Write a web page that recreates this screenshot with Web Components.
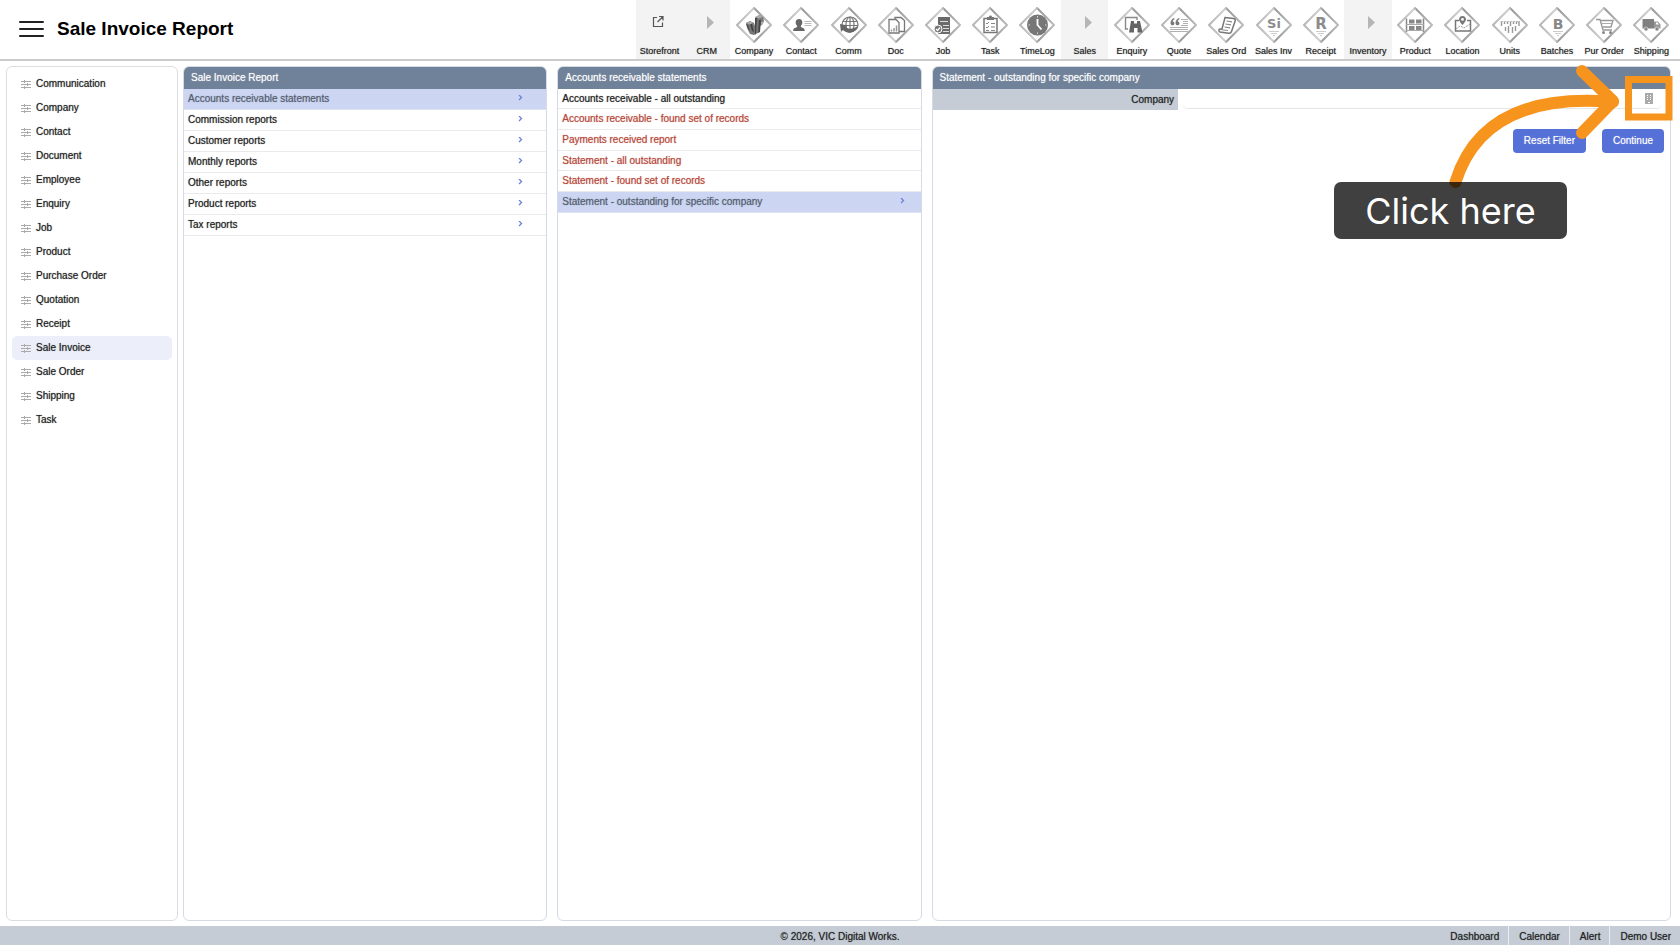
<!DOCTYPE html>
<html lang="en">
<head>
<meta charset="utf-8">
<title>Sale Invoice Report</title>
<style>
  html, body { height: 100%; }
  body { margin: 0; background: #fff; color: #222; font: 10px/12px "Liberation Sans", Arial, sans-serif; text-shadow: 0 0 1px color-mix(in srgb, currentColor 60%, transparent); }
</style>
</head>
<body>
<report-app></report-app>

<script>
const define = (name, html) => customElements.define(name, class extends HTMLElement {
  constructor() {
    super();
    this.attachShadow({ mode: 'open' });
  }
  connectedCallback() {
    const t = document.createElement('template');
    t.innerHTML = typeof html === 'function' ? html(this) : html;
    this.shadowRoot.replaceChildren(t.content.cloneNode(true));
  }
});

/* Toolbar glyphs, drawn inside a 36 x 36 diamond */
const glyphs = {
  company: `<path fill="#777" d="M10 16l4-2 4 2 1 3V11l4-3 4 2 1 4-2 4-2 1-2 7-4 2-4-1-3-6z"/><path fill="#444" d="M19 11l2-1-1 16-1 2zM14 17h2l2 8-2-1zM23 13l2 0-1 12-2 1zM10 17l2 1 2 6-1-1z"/><path fill="#aaa" d="M19 10l4-2 4 2-4 1.500zM10 16l4-2 3 2-3 1.500zM25 15l3-1-1 3-2 1z"/>`,
  contact: `<path fill="#666" d="M16 12c2.300 0 3.300 1.500 3.300 3.500 0 1.500-.6 2.500-1.400 3.200v1.300l2.600 1.200c1 .5 1.200 1.200 1.200 2.800H10.200c0-1.600.2-2.300 1.200-2.800l2.700-1.200v-1.300c-.9-.7-1.400-1.700-1.400-3.200 0-2 1-3.500 3.300-3.500z"/><path stroke="#bbb" d="M21.500 14.500h7M21.500 16.500h7M21.500 18.500h7"/>`,
  comm: `<g fill="none" stroke="#777" stroke-width="1.200"><ellipse cx="19" cy="17.500" rx="8" ry="7.500"/><ellipse cx="19" cy="17.500" rx="4" ry="7.500"/><path d="M19 10v15M12 14.500h14M11 18.500h16"/></g><path fill="#666" d="M9 17l8 1.500-2.500 1.500c3 2.500 8 2.500 12-1-2 6.500-9 9-14.500 4l-2 2z"/>`,
  doc: `<g fill="#fff" stroke="#777" stroke-width="1.300"><path d="M17 10.500h6l3.500 3v11h-9.500z"/><path d="M11 12.500h7l3 3v10.500H11z"/></g><path stroke="#999" stroke-width="1.500" d="M13.500 24.500v-2M16 24.500v-3.500M18.500 24.500v-6"/>`,
  job: `<path fill="#6a6a6a" d="M13 10h12v17H13z"/><path stroke="#ddd" d="M15 14.500h8M18 18.500h6M18 21.500h6M18 24.500h6"/><circle cx="13" cy="22" r="4" fill="#777" stroke="#fff"/><path d="M11 22l1.500 1.500L15 20.500" fill="none" stroke="#fff" stroke-width="1.200"/>`,
  task: `<path fill="#fff" stroke="#777" stroke-width="1.500" d="M12 11.500h13v14H12z"/><path fill="#777" d="M15 10h2c0-2 3-2 3 0h2v3h-7z"/><path d="M14 16l1 1 2-2M14 20l1 1 2-2M14 23.500h3M19 16.500h4M19 20h4M19 23.500h4" fill="none" stroke="#888"/>`,
  timelog: `<circle cx="18.500" cy="18" r="10.500" fill="#777"/><path d="M18.500 12v6l4 4.500" fill="none" stroke="#fff" stroke-width="1.800"/><path d="M18.500 9v1.500M18.500 25.500V27M9.500 18H11M26 18h1.500" stroke="#ddd"/>`,
  enquiry: `<path fill="none" stroke="#888" stroke-width="1.400" d="M14 22h-2.500V10.500H23V13"/><path fill="#666" d="M17 14h3v2.500h3V14h3l2.500 11.500h-5V21h-3.500v4.500h-5z"/>`,
  quote: `<path fill="#777" d="M13 11c-2 1-3.500 2.500-3.500 5 0 1.500 1 2.300 2 2.300s1.900-.8 1.900-1.900-.8-1.800-1.700-1.800c.1-1.200 1-2 2-2.600zM18 11c-2 1-3.500 2.500-3.500 5 0 1.500 1 2.300 2 2.300s1.900-.8 1.900-1.900-.8-1.800-1.700-1.800c.1-1.200 1-2 2-2.600z"/><path stroke="#b0b0b0" d="M20 12.500h7M22 14.500h5M22 16.500h5M20 18.500h7M9 20.500h18M9 22.500h18M9 24.500h18"/>`,
  salesord: `<path fill="#fff" stroke="#777" stroke-width="1.500" d="M17 10.500l8.500 1c2 .4 2 1.800 1.500 3l-3.500 10c-.5 1.500-1.500 2-3 1.800l-8.500-1.300c-1.500-.5-1.500-3 0-3h2z"/><path stroke="#888" stroke-width="1.200" d="M18.500 14l5.500.8M17.500 17l5.500.8M16.500 20l5.500.8M12 22.500l8 1"/>`,
  salesinv: `<text x="18" y="21" text-anchor="middle" font-family="DejaVu Sans" font-weight="700" font-size="13" fill="#8c8c8c">Si</text><path stroke="#ccc" d="M13 24.500h10M15 26.500h6M17 28.500h2"/>`,
  receipt: `<text x="18" y="22" text-anchor="middle" font-family="DejaVu Sans" font-weight="700" font-size="15" fill="#8c8c8c">R</text><path stroke="#ccc" d="M13 24.500h10M15 26.500h6M17 28.500h2"/>`,
  product: `<path stroke="#888" stroke-width="1.500" d="M9.500 11.500v13.500M26.500 11.500v13.500"/><path stroke="#aaa" d="M9 17.500h18M9 23.500h18"/><path fill="#888" d="M12 12.500h5.500v4H12zM19 12.500h5.500v4H19zM12 19h5.500v4H12zM19 19h5.500v4H19z"/>`,
  location: `<path fill="none" stroke="#777" stroke-width="1.500" d="M15 13.500h-3.500v10.500h15V13.500H23"/><path fill="none" stroke="#999" stroke-dasharray="2 1" d="M12 22l4-3 4 2 6-4"/><path fill="#777" fill-rule="evenodd" d="M18.500 9c2 0 3.500 1.500 3.500 3.300 0 2.300-3.500 5.700-3.500 5.700S15 14.600 15 12.300C15 10.500 16.500 9 18.500 9zm0 2a1.400 1.400 0 100 2.800 1.400 1.400 0 000-2.800z"/>`,
  units: `<path stroke="#999" stroke-width="1.400" d="M9.500 14v5M12.500 14v3M15.500 14v3M18.500 14v5M21.500 14v3M24.500 14v3M27 14v5M13.500 20v4M16.500 19v7M20.500 20v6M23.500 19v5"/><path stroke="#bbb" d="M9 14.500h18" stroke-dasharray="2 1"/>`,
  batches: `<text x="19" y="22" text-anchor="middle" font-family="DejaVu Sans" font-weight="700" font-size="14" fill="#888">B</text><path stroke="#ccc" d="M14 24.500h10M16 26.500h6M18 28.500h2"/>`,
  purorder: `<path fill="none" stroke="#999" stroke-width="1.400" d="M10 12.500h4l3 10.500h9M15 13.500h12l-2 6.500h-8"/><path stroke="#aaa" d="M16 16.500h10"/><circle cx="17.500" cy="25.500" r="1.500" fill="#888"/><circle cx="24.500" cy="25.500" r="1.500" fill="#888"/>`,
  shipping: `<path fill="#808080" d="M9.500 12H21v9.500H9.500z"/><path fill="#999" d="M21 14.500h4l2.500 3v4H21z"/><path fill="#fff" d="M23 15.500h1.500l1.500 2h-3z"/><g fill="#888" stroke="#fff" stroke-width=".5"><circle cx="13" cy="22" r="2"/><circle cx="24" cy="22" r="2"/></g>`
};

define('tool-item', el => {
  const kind = el.getAttribute('kind');
  let art;
  if (kind === 'launch')
    art = `<svg class="art" viewBox="0 0 36 36" fill="none" stroke="#555" stroke-width="1.200"><path d="M15 10.500h-3.500v9h9v-4M17 9.500h4v4M21 9.500l-5.500 5.500"/></svg>`;
  else if (kind === 'group')
    art = `<svg class="art" viewBox="0 0 36 36"><path fill="#b5b5b5" d="M18 9l7 6.500-7 6.500z"/></svg>`;
  else
    art = `<svg class="art" viewBox="0 0 36 36"><defs><linearGradient id="g" x1="0" y1="0" x2="1" y2="0"><stop offset="0" stop-color="#b5b5b5"/><stop offset=".45" stop-color="#d0d0d0"/><stop offset=".55" stop-color="#999"/><stop offset="1" stop-color="#bbb"/></linearGradient></defs><path fill="#fff" stroke="url(#g)" stroke-width="2" stroke-linejoin="round" d="M18 1L35 18 18 35 1 18z"/>${glyphs[kind]}</svg>`;
  return `<style>
    :host { display: block; min-width: 0; }
    a { display: flex; flex-direction: column; align-items: center; gap: 2px; height: 100%; box-sizing: border-box; padding-top: 7px; color: #222; text-decoration: none; font-size: 9px; line-height: 12px; white-space: nowrap; }
    a.band { background: #f3f3f3; }
    .art { width: 36px; height: 36px; flex: none; text-shadow: none; }
  </style><a href="#" class="${kind === 'launch' || kind === 'group' ? 'band' : ''}">${art}<span><slot></slot></span></a>`;
});

define('app-header', () => {
  const tools = [['launch','Storefront'],['group','CRM'],['company','Company'],['contact','Contact'],['comm','Comm'],['doc','Doc'],['job','Job'],['task','Task'],['timelog','TimeLog'],['group','Sales'],['enquiry','Enquiry'],['quote','Quote'],['salesord','Sales Ord'],['salesinv','Sales Inv'],['receipt','Receipt'],['group','Inventory'],['product','Product'],['location','Location'],['units','Units'],['batches','Batches'],['purorder','Pur Order'],['shipping','Shipping']];
  return `<style>
    :host { display: flex; height: 59px; border-bottom: 2px solid #ccc; align-items: stretch; justify-content: space-between; flex: none; }
    .brand { display: flex; align-items: center; gap: 13px; padding: 0 0 2px 19px; }
    button { border: 0; background: none; padding: 0; width: 25px; height: 18px; display: block; }
    button svg { display: block; }
    h1 { margin: 0; font-size: 19px; line-height: 24px; font-weight: 700; color: #000; white-space: nowrap; text-shadow: none; }
    nav { display: grid; grid-template-columns: repeat(22, minmax(0, 1fr)); flex: 0 1 1039px; margin-right: 5px; }
  </style>
  <div class="brand"><button aria-label="Menu"><svg width="25" height="18" stroke="#222" stroke-width="2" stroke-linecap="round"><path d="M1 2h23M1 9h23M1 16h23"/></svg></button><h1>Sale Invoice Report</h1></div>
  <nav>${tools.map(([k, t]) => `<tool-item kind="${k}">${t}</tool-item>`).join('')}</nav>`;
});

define('side-menu', () => {
  const items = ['Communication','Company','Contact','Document','Employee','Enquiry','Job','Product','Purchase Order','Quotation','Receipt','Sale Invoice','Sale Order','Shipping','Task'];
  return `<style>
    :host { display: block; box-sizing: border-box; border: 1px solid #ddd; border-radius: 6px; padding: 5px; }
    a { display: flex; align-items: center; gap: 5px; height: 24px; line-height: 14px; padding-left: 9px; border-radius: 5px; color: #222; text-decoration: none; }
    a[aria-current] { background: #eceffa; }
  </style>${items.map(t => `<a href="#"${t === 'Sale Invoice' ? ' aria-current="page"' : ''}><svg width="10" height="10" stroke="#aaa" fill="none"><path d="M0 2.500h10M0 5.500h10M0 8.500h10M3.500 1v3M6.500 4v3M3.500 7v3"/></svg><span>${t}</span></a>`).join('')}`;
});

define('report-panel', `<style>
    :host { display: flex; flex-direction: column; box-sizing: border-box; min-width: 0; border: 1px solid #d5dae4; border-radius: 6px; overflow: hidden; }
    h2 { margin: -1px -1px 0; padding: 0 8px; height: 23px; line-height: 23px; font-size: 10px; font-weight: 400; color: #fff; background: #708299; flex: none; box-sizing: border-box; }
  </style><h2><slot name="title"></slot></h2><slot></slot>`);

define('report-row', el => `<style>
    :host { display: block; }
    a { display: flex; align-items: center; justify-content: space-between; box-sizing: border-box; height: 21px; border-bottom: 1px solid #eaeaea; padding: 0 var(--chevron-inset, 23px) 0 4px; color: #222; text-decoration: none; white-space: nowrap; }
    :host([compact]) a { height: 20px; }
    :host([tone="red"]) a { color: #b5483c; }
    :host([selected]) a { background: #ccd5f1; border-color: #dfe4f5; color: #555d70; }
  </style><a href="#"><slot></slot>${el.hasAttribute('more') ? '<svg width="5" height="8" fill="none" stroke="#6a82dc" stroke-width="1.300"><path d="M1 0l2.500 2.500L1 5"/></svg>' : ''}</a>`);

define('filter-form', `<style>
    :host { display: block; }
    .field { display: flex; height: 21px; }
    label { flex: 0 0 33.3%; box-sizing: border-box; background: #c5ccd6; text-align: right; padding-right: 4px; line-height: 21px; color: #222; }
    .box { flex: 1; display: flex; align-items: center; margin: 0 8px 0 5px; border-bottom: 1px solid #e6e6e6; border-radius: 0 0 5px 5px; padding-right: 9px; height: 19px; }
    input { flex: 1; min-width: 0; border: 0; background: none; outline: 0; padding: 0 4px; font: inherit; }
    button { font: inherit; text-shadow: inherit; border: 0; padding: 0; }
    .pick { background: none; width: 8px; height: 11px; }
    .pick svg { display: block; }
    .actions { display: flex; justify-content: flex-end; gap: 16px; padding: 19px 6px 0; }
    .actions button { height: 24px; padding: 0 11px; border-radius: 4px; background: #5570d6; color: #fff; }
  </style>
  <div class="field"><label for="company">Company</label>
    <div class="box"><input id="company" type="text"><button class="pick" aria-label="Choose company"><svg width="8" height="11"><path fill="#aaa" d="M0 0h8v11H0z"/><path stroke="#fff" d="M2 2.500h1M5 2.500h1M2 4.500h1M5 4.500h1M2 6.500h1M5 6.500h1M3 9.500h2"/></svg></button></div></div>
  <div class="actions"><button>Reset Filter</button><button>Continue</button></div>`);

define('click-hint', `<style>
    :host { position: absolute; top: 64px; right: 0; width: 350px; height: 180px; pointer-events: none; text-shadow: none; }
    svg { position: absolute; inset: 0; }
    p { position: absolute; left: 4px; top: 118px; width: 233px; height: 57px; margin: 0; border-radius: 7px; background: rgba(0, 0, 0, .75); color: #fff; font: 400 36px/59px Inter, sans-serif; text-align: center; white-space: nowrap; }
  </style>
  <svg width="350" height="180" fill="none" stroke="#f7941d">
    <g stroke-width="12" stroke-linecap="round" stroke-linejoin="round"><path d="M125.500 118C145 55 200 31 283 38"/><path d="M252 7L283 37 252 69"/></g>
    <path stroke-width="7" d="M298.500 15.500h40.500v37.500h-40.500z"/>
  </svg><p>Click here</p>`);

define('app-footer', `<style>
    :host { display: grid; grid-template-columns: 1fr auto 1fr; align-items: stretch; height: 19px; line-height: 21px; background: #c5ccd6; color: #222; flex: none; }
    nav { display: flex; justify-content: flex-end; }
    a { color: inherit; text-decoration: none; padding: 0 9px 0 10px; white-space: nowrap; }
    a + a { border-left: 1px solid #e9ecf1; }
    span { grid-column: 2; }
  </style><span>© 2026, VIC Digital Works.</span>
  <nav><a href="#">Dashboard</a><a href="#">Calendar</a><a href="#">Alert</a><a href="#">Demo User</a></nav>`);

define('report-app', `<style>
    :host { display: flex; flex-direction: column; min-height: 100vh; position: relative; }
    main { flex: 1; display: grid; grid-template-columns: 172px minmax(0, 1fr); gap: 5px; padding: 5px 9px 5px 6px; }
    .columns { display: grid; grid-template-columns: minmax(0, 100fr) minmax(0, 100fr) minmax(0, 203fr); gap: 10px; }
    .detail { --chevron-inset: 16px; }
  </style>
  <app-header></app-header>
  <main>
    <side-menu></side-menu>
    <div class="columns">
      <report-panel><span slot="title">Sale Invoice Report</span>
        <report-row more selected>Accounts receivable statements</report-row>
        <report-row more>Commission reports</report-row>
        <report-row more>Customer reports</report-row>
        <report-row more>Monthly reports</report-row>
        <report-row more>Other reports</report-row>
        <report-row more>Product reports</report-row>
        <report-row more>Tax reports</report-row>
      </report-panel>
      <report-panel class="detail"><span slot="title">Accounts receivable statements</span>
        <report-row compact>Accounts receivable - all outstanding</report-row>
        <report-row tone="red">Accounts receivable - found set of records</report-row>
        <report-row tone="red">Payments received report</report-row>
        <report-row compact tone="red">Statement - all outstanding</report-row>
        <report-row tone="red">Statement - found set of records</report-row>
        <report-row more selected>Statement - outstanding for specific company</report-row>
      </report-panel>
      <report-panel><span slot="title">Statement - outstanding for specific company</span>
        <filter-form></filter-form>
      </report-panel>
    </div>
  </main>
  <app-footer></app-footer>
  <click-hint></click-hint>`);
</script>
</body>
</html>
